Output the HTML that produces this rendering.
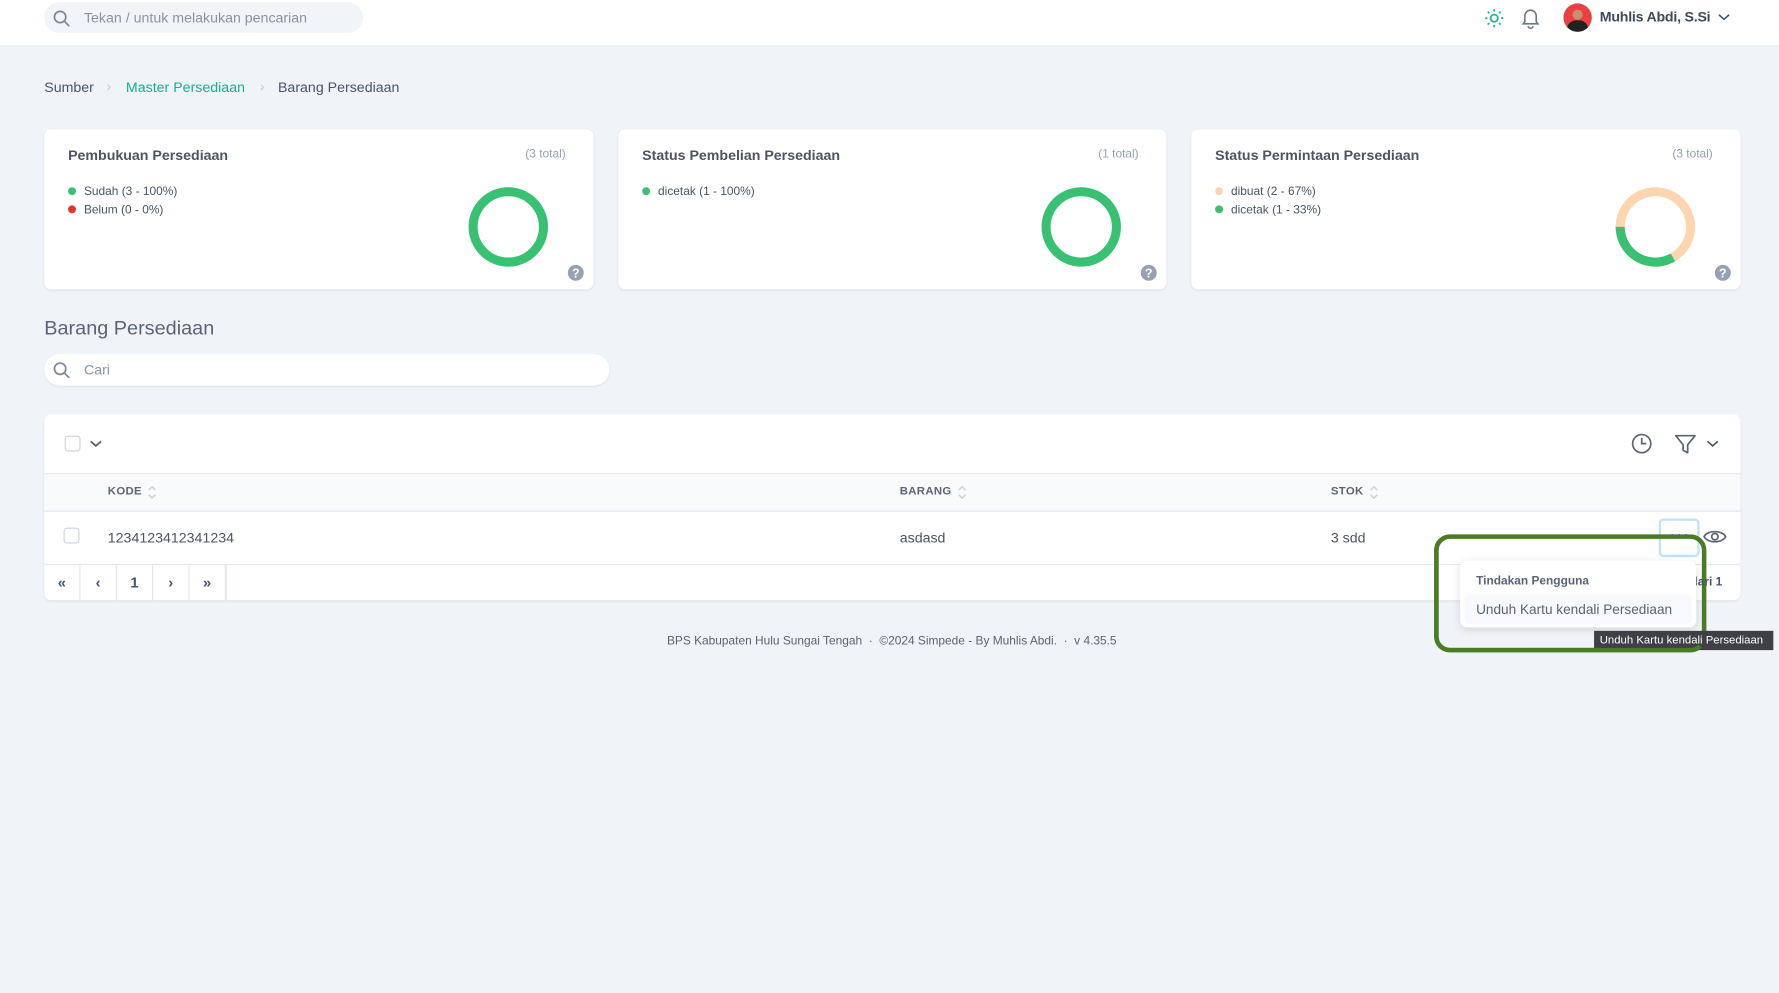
<!DOCTYPE html>
<html><head><meta charset="utf-8"><style>
*{box-sizing:border-box;margin:0;padding:0}
html,body{width:1779px;height:993px;overflow:hidden;background:#f0f3f8;font-family:"Liberation Sans",sans-serif;color:#4b5563}
#w{width:1568px;height:875px;transform:scale(1.13457);transform-origin:0 0;position:relative}
.a{position:absolute}
.top{left:0;top:0;width:1568px;height:41px;background:#fff;border-bottom:1px solid #e8ecf2}
.pill{border-radius:14px}
.card{background:#fff;border-radius:6px;box-shadow:0 1px 2px rgba(0,0,0,.08)}
.t13{font-size:12.5px}.t11{font-size:10.5px}
.dot{width:7px;height:7px;border-radius:50%}
.cb{width:14px;height:14px;border:1px solid #cbd2dc;border-radius:3px;background:#fff}
.th{font-size:10px;font-weight:bold;color:#5b6576;letter-spacing:.3px}
.pg{width:32px;height:32px;border-right:1px solid #e3e7ee;display:flex;align-items:center;justify-content:center;font-size:13px;color:#475569;font-weight:bold}
</style></head><body><div id="w">
<div class="a top"></div>
<div class="a pill" style="left:39px;top:2px;width:281px;height:27px;background:#f1f4f8"></div>
<svg class="a" style="left:46px;top:8px" width="16" height="16" viewBox="0 0 16 16" fill="none" stroke="#7b8799" stroke-width="1.5"><circle cx="7" cy="7" r="5"/><path d="M11 11l4 4"/></svg>
<div class="a t13" style="left:74px;top:9px;color:#8a94a6">Tekan / untuk melakukan pencarian</div>
<svg class="a" style="left:1308px;top:7px" width="18" height="18" viewBox="0 0 18 18" fill="none" stroke="#1fb497" stroke-width="1.5"><circle cx="9" cy="9" r="3.2"/><path d="M9 1v2M9 15v2M1 9h2M15 9h2M3.3 3.3l1.4 1.4M13.3 13.3l1.4 1.4M3.3 14.7l1.4-1.4M13.3 4.7l1.4-1.4"/></svg>
<svg class="a" style="left:1340px;top:6px" width="18" height="20" viewBox="0 0 18 20" fill="none" stroke="#6b7689" stroke-width="1.4"><path d="M4 13V8a5 5 0 0110 0v5l1.5 2h-13z"/><path d="M7 17a2 2 0 004 0"/></svg>
<div class="a" style="left:1378px;top:3px;width:25px;height:25px;border-radius:50%;background:radial-gradient(circle at 50% 40%,#c98f6e 0 22%,#e94040 23%);overflow:hidden"><div style="position:absolute;left:3px;top:15px;width:19px;height:12px;border-radius:8px 8px 0 0;background:#222"></div></div>
<div class="a" style="left:1410px;top:8px;font-size:12.5px;font-weight:bold;color:#3f4a5c;letter-spacing:-.2px">Muhlis Abdi, S.Si</div>
<svg class="a" style="left:1514px;top:11px" width="11" height="8" viewBox="0 0 11 8" fill="none" stroke="#4b5563" stroke-width="1.4"><path d="M1 2l4.5 4L10 2"/></svg>

<div class="a t13" style="left:39px;top:70px">Sumber</div>
<div class="a t13" style="left:94px;top:69px;color:#c3c9d3">›</div>
<div class="a t13" style="left:111px;top:70px;color:#17b18e">Master Persediaan</div>
<div class="a t13" style="left:229px;top:69px;color:#c3c9d3">›</div>
<div class="a t13" style="left:245px;top:70px">Barang Persediaan</div>

<div class="a card" style="left:39px;top:114px;width:484px;height:141px"></div>
<div class="a card" style="left:545px;top:114px;width:483px;height:141px"></div>
<div class="a card" style="left:1050px;top:114px;width:484px;height:141px"></div>

<div class="a t13" style="left:60px;top:130px;font-weight:bold">Pembukuan Persediaan</div>
<div class="a t11" style="left:463px;top:130px;color:#97a1b2">(3 total)</div>
<div class="a dot" style="left:60px;top:165px;background:#38c172"></div><div class="a t11" style="left:74px;top:163px">Sudah (3 - 100%)</div>
<div class="a dot" style="left:60px;top:181px;background:#e3342f"></div><div class="a t11" style="left:74px;top:179px">Belum (0 - 0%)</div>
<svg class="a" style="left:412px;top:164px" width="72" height="72"><circle cx="36" cy="36" r="31" fill="none" stroke="#38c172" stroke-width="8"/></svg>

<div class="a t13" style="left:566px;top:130px;font-weight:bold">Status Pembelian Persediaan</div>
<div class="a t11" style="left:968px;top:130px;color:#97a1b2">(1 total)</div>
<div class="a dot" style="left:566px;top:165px;background:#38c172"></div><div class="a t11" style="left:580px;top:163px">dicetak (1 - 100%)</div>
<svg class="a" style="left:917px;top:164px" width="72" height="72"><circle cx="36" cy="36" r="31" fill="none" stroke="#38c172" stroke-width="8"/></svg>

<div class="a t13" style="left:1071px;top:130px;font-weight:bold">Status Permintaan Persediaan</div>
<div class="a t11" style="left:1474px;top:130px;color:#97a1b2">(3 total)</div>
<div class="a dot" style="left:1071px;top:165px;background:#fdd5ae"></div><div class="a t11" style="left:1085px;top:163px">dibuat (2 - 67%)</div>
<div class="a dot" style="left:1071px;top:181px;background:#38c172"></div><div class="a t11" style="left:1085px;top:179px">dicetak (1 - 33%)</div>
<svg class="a" style="left:1423px;top:164px" width="72" height="72"><circle cx="36" cy="36" r="31" fill="none" stroke="#fdd5ae" stroke-width="8"/><circle cx="36" cy="36" r="31" fill="none" stroke="#38c172" stroke-width="8" stroke-dasharray="64.9 200" transform="rotate(60 36 36)"/></svg>

<svg class="a" style="left:500px;top:233px" width="15" height="15"><circle cx="7.5" cy="7.5" r="7" fill="#96a1b5"/><text x="7.5" y="11.5" font-size="11" font-weight="bold" fill="#fff" text-anchor="middle" font-family="Liberation Sans">?</text></svg>
<svg class="a" style="left:1005px;top:233px" width="15" height="15"><circle cx="7.5" cy="7.5" r="7" fill="#96a1b5"/><text x="7.5" y="11.5" font-size="11" font-weight="bold" fill="#fff" text-anchor="middle" font-family="Liberation Sans">?</text></svg>
<svg class="a" style="left:1511px;top:233px" width="15" height="15"><circle cx="7.5" cy="7.5" r="7" fill="#96a1b5"/><text x="7.5" y="11.5" font-size="11" font-weight="bold" fill="#fff" text-anchor="middle" font-family="Liberation Sans">?</text></svg>

<div class="a" style="left:39px;top:279px;font-size:17.5px;color:#5b6576">Barang Persediaan</div>
<div class="a pill" style="left:39px;top:312px;width:498px;height:28px;background:#fff;box-shadow:0 1px 2px rgba(0,0,0,.08)"></div>
<svg class="a" style="left:46px;top:318px" width="16" height="16" viewBox="0 0 16 16" fill="none" stroke="#7b8799" stroke-width="1.5"><circle cx="7" cy="7" r="5"/><path d="M11 11l4 4"/></svg>
<div class="a t13" style="left:74px;top:319px;color:#8a94a6">Cari</div>

<div class="a card" style="left:39px;top:365px;width:1495px;height:164px;overflow:hidden">
 <div class="a" style="left:0;top:52px;width:1495px;height:34px;background:#f8fafc;border-top:1px solid #e3e7ee;border-bottom:1px solid #e3e7ee"></div>
 <div class="a" style="left:0;top:132px;width:1495px;height:1px;background:#e3e7ee"></div>
</div>
<div class="a cb" style="left:57px;top:384px"></div>
<svg class="a" style="left:79px;top:387px" width="11" height="8" fill="none" stroke="#4b5563" stroke-width="1.4"><path d="M1 2l4.5 4L10 2"/></svg>
<svg class="a" style="left:1437px;top:381px" width="20" height="20" fill="none" stroke="#5b6576" stroke-width="1.5"><circle cx="10" cy="10" r="8"/><path d="M10 5v5h4"/></svg>
<svg class="a" style="left:1476px;top:382px" width="20" height="19" fill="none" stroke="#5b6576" stroke-width="1.5" stroke-linejoin="round"><path d="M1 2h17l-6.5 8v7l-4-2v-5z"/></svg>
<svg class="a" style="left:1504px;top:387px" width="11" height="8" fill="none" stroke="#4b5563" stroke-width="1.4"><path d="M1 2l4.5 4L10 2"/></svg>

<div class="a th" style="left:95px;top:428px">KODE</div>
<div class="a th" style="left:793px;top:428px">BARANG</div>
<div class="a th" style="left:1173px;top:428px">STOK</div>
<svg class="a" style="left:129px;top:426px" width="10" height="16" fill="none" stroke="#cbd2dc" stroke-width="1.3"><path d="M2 6l3-3 3 3M2 10l3 3 3-3"/></svg>
<svg class="a" style="left:843px;top:426px" width="10" height="16" fill="none" stroke="#cbd2dc" stroke-width="1.3"><path d="M2 6l3-3 3 3M2 10l3 3 3-3"/></svg>
<svg class="a" style="left:1206px;top:426px" width="10" height="16" fill="none" stroke="#cbd2dc" stroke-width="1.3"><path d="M2 6l3-3 3 3M2 10l3 3 3-3"/></svg>

<div class="a cb" style="left:56px;top:465px"></div>
<div class="a t13" style="left:95px;top:467px">1234123412341234</div>
<div class="a t13" style="left:793px;top:467px">asdasd</div>
<div class="a t13" style="left:1173px;top:467px">3 sdd</div>
<div class="a" style="left:1462px;top:457px;width:36px;height:34px;border:2px solid #bde3f8;border-radius:4px"></div>
<div class="a" style="left:1264px;top:471px;width:240px;height:104px;border:4px solid #4a7c23;border-radius:14px"></div>
<svg class="a" style="left:1470px;top:469px" width="20" height="6" fill="#5b6576"><circle cx="4" cy="3" r="1.3"/><circle cx="10" cy="3" r="1.3"/><circle cx="16" cy="3" r="1.3"/></svg>
<svg class="a" style="left:1501px;top:465px" width="21" height="16" fill="none" stroke="#5b6576" stroke-width="1.5"><path d="M1 8c3-6 16-6 19 0-3 6-16 6-19 0z"/><circle cx="10.5" cy="8" r="2.8"/></svg>

<div class="a" style="left:39px;top:497px;display:flex;border-right:1px solid #e3e7ee">
<div class="pg">«</div><div class="pg">‹</div><div class="pg">1</div><div class="pg">›</div><div class="pg">»</div></div>
<div class="a t11" style="left:1490px;top:507px;font-weight:bold;color:#475569">dari 1</div>

<div class="a" style="left:0;width:1572px;top:559px;text-align:center;color:#5b6576;font-size:10.5px">BPS Kabupaten Hulu Sungai Tengah &nbsp;·&nbsp; ©2024 Simpede - By Muhlis Abdi. &nbsp;·&nbsp; v 4.35.5</div>

<div class="a" style="left:1287px;top:494px;width:208px;height:59px;background:#fff;border-radius:6px;box-shadow:0 2px 8px rgba(0,0,0,.12)"></div>
<div class="a t11" style="left:1301px;top:506px;font-weight:bold;color:#5b6576">Tindakan Pengguna</div>
<div class="a" style="left:1291px;top:524px;width:200px;height:26px;background:#f7f9fc;border-radius:4px"></div>
<div class="a" style="left:1301px;top:530px;color:#5b6576;font-size:12px">Unduh Kartu kendali Persediaan</div>
<div class="a" style="left:1405px;top:556px;width:158px;height:17px;background:#3f3f46;color:#fff;font-size:10px;line-height:17px;padding-left:5px;white-space:nowrap">Unduh Kartu kendali Persediaan</div>
<div class="a" style="left:1264px;top:471px;width:240px;height:104px;border:4px solid #4a7c23;border-radius:14px;border-color:transparent transparent #4a7c23 #4a7c23"></div>
</div></body></html>
